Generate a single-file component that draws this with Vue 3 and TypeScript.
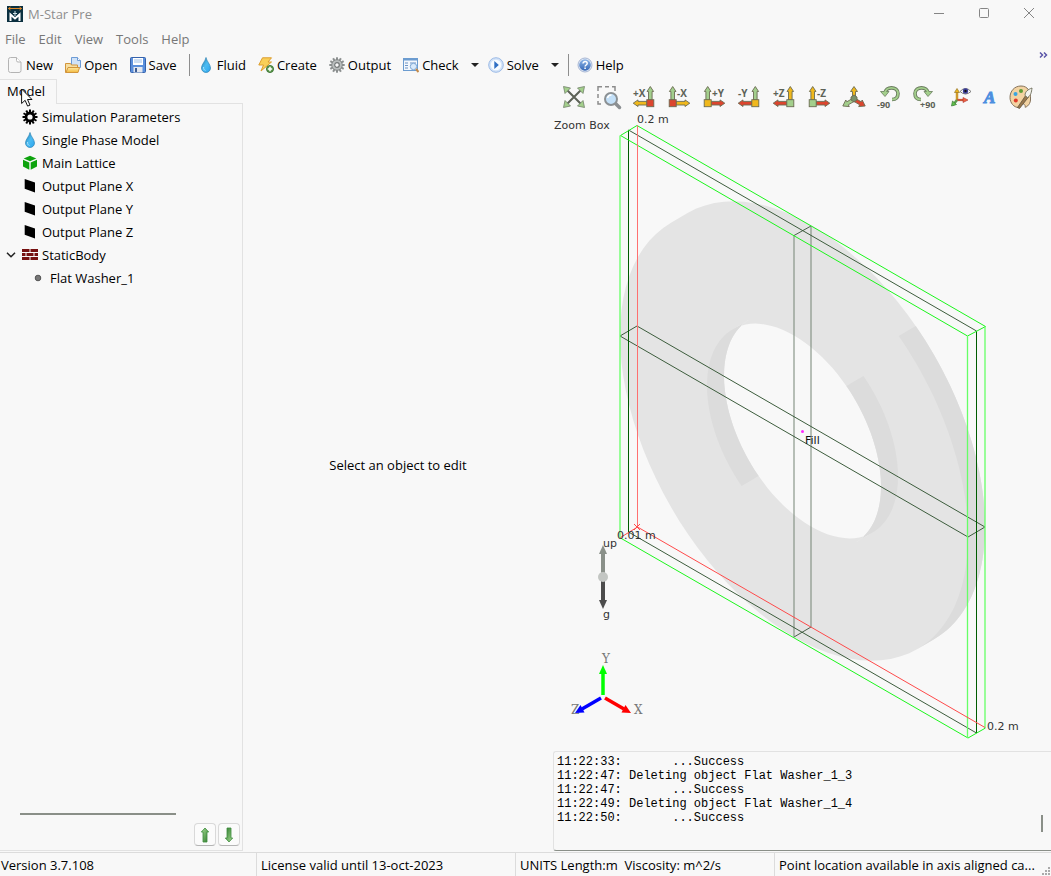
<script setup lang="ts">
import { ref } from 'vue'

interface Tool { label: string; icon: string; menu?: boolean; divider?: boolean }
interface View { sign: string; flip: boolean; up: string; side: string; hub: string }
interface Node { label: string; icon: string; open?: boolean; child?: boolean }

const menus = ['File', 'Edit', 'View', 'Tools', 'Help']

const tools: Tool[] = [
  { label: 'New', icon: 'new' },
  { label: 'Open', icon: 'open' },
  { label: 'Save', icon: 'save', divider: true },
  { label: 'Fluid', icon: 'drop' },
  { label: 'Create', icon: 'create' },
  { label: 'Output', icon: 'gear' },
  { label: 'Check', icon: 'check', menu: true },
  { label: 'Solve', icon: 'solve', menu: true, divider: true },
  { label: 'Help', icon: 'help' },
]

const green = '#a3cf8c'
const red = '#dc452e'
const gold = '#f0b81c'

const views: View[] = [
  { sign: '+X', flip: true, up: green, side: gold, hub: red },
  { sign: '-X', flip: false, up: green, side: gold, hub: red },
  { sign: '+Y', flip: false, up: green, side: red, hub: gold },
  { sign: '-Y', flip: true, up: green, side: red, hub: gold },
  { sign: '+Z', flip: true, up: gold, side: red, hub: green },
  { sign: '-Z', flip: false, up: gold, side: red, hub: green },
]

const nodes: Node[] = [
  { label: 'Simulation Parameters', icon: 'cog' },
  { label: 'Single Phase Model', icon: 'drop' },
  { label: 'Main Lattice', icon: 'cube' },
  { label: 'Output Plane X', icon: 'plane' },
  { label: 'Output Plane Y', icon: 'plane' },
  { label: 'Output Plane Z', icon: 'plane' },
  { label: 'StaticBody', icon: 'bricks', open: true },
  { label: 'Flat Washer_1', icon: 'dot', child: true },
]

const log = ref(
  [
    '11:22:33:       ...Success',
    '11:22:47: Deleting object Flat Washer_1_3',
    '11:22:47:       ...Success',
    '11:22:49: Deleting object Flat Washer_1_4',
    '11:22:50:       ...Success',
  ].join('\n'),
)

const status = [
  'Version 3.7.108',
  'License valid until 13-oct-2023',
  'UNITS Length:m  Viscosity: m^2/s',
  'Point location available in axis aligned ca...',
]

// Isometric projection of the washer: each face is a circle sheared into the X/Y plane.
type Face = 'front' | 'back'
const centre = { front: [794, 436], back: [811, 426] }

function arc(face: Face, radius: number, from: number, to: number): string[] {
  const [cx, cy] = centre[face]
  const steps = 48
  return Array.from({ length: steps + 1 }, (_, i) => {
    const t = ((from + ((to - from) * i) / steps) * Math.PI) / 180
    const x = cx + radius * 348 * Math.cos(t)
    const y = cy + radius * (201 * Math.cos(t) + 402 * Math.sin(t))
    return `${x.toFixed(1)},${y.toFixed(1)}`
  })
}
const path = (points: string[]) => `M${points.join('L')}Z`
const band = (radius: number, from: number, to: number) =>
  path([...arc('front', radius, from, to), ...arc('back', radius, to, from)])

const washer =
  path([...arc('back', 0.5, -135, 45), ...arc('front', 0.5, 45, 225)]) +
  path([...arc('front', 0.25, -135, 45), ...arc('back', 0.25, 45, 225)])
const walls = band(0.5, -53, 45) + band(0.25, -53, 45) + band(0.25, 127, 225)
const teeth = Array.from({ length: 12 }, (_, i) => i * 30)
</script>

<template>
  <div class="window">
    <svg class="defs" aria-hidden="true">
      <defs>
        <linearGradient id="g-drop" x1="0" y1="0" x2="1" y2="1">
          <stop offset="0" stop-color="#1d7fb0" /><stop offset=".5" stop-color="#4cbcf2" /><stop offset="1" stop-color="#2ba4ee" />
        </linearGradient>
        <linearGradient id="g-blue" x1="0" y1="0" x2="0" y2="1">
          <stop offset="0" stop-color="#8fb8ea" /><stop offset="1" stop-color="#3567b5" />
        </linearGradient>
        <linearGradient id="g-green" x1="0" y1="0" x2="1" y2="1">
          <stop offset="0" stop-color="#a8dc94" /><stop offset="1" stop-color="#2c7a2c" />
        </linearGradient>
        <linearGradient id="g-gold" x1="0" y1="0" x2="0" y2="1">
          <stop offset="0" stop-color="#fdeaa6" /><stop offset="1" stop-color="#f3b93c" />
        </linearGradient>
      </defs>
      <symbol id="i-new" viewBox="0 0 16 16">
        <path d="M3.500 .5h6l4.500 4.500v8.500a2 2 0 0 1-2 2h-8.500a2 2 0 0 1-2-2v-11a2 2 0 0 1 2-2z" fill="#f7f7f7" stroke="#b4b4b4" />
        <path d="M9.500 .5v3a1.500 1.500 0 0 0 1.500 1.500h3" fill="#fff" stroke="#b4b4b4" />
      </symbol>
      <symbol id="i-open" viewBox="0 0 16 16">
        <path d="M6.500 .5h6l3 3v7h-9z" fill="#cfe2f8" stroke="#6c9bd6" />
        <path d="M12.500 .5v3h3" fill="#fff" stroke="#6c9bd6" />
        <path d="M.5 15.500v-9h5l1 1.500h6v7.500z" fill="#f6dfa2" stroke="#d2953c" />
        <path d="M3 10.500h11.500l-1.500 5h-12z" fill="url(#g-gold)" stroke="#d2953c" />
      </symbol>
      <symbol id="i-save" viewBox="0 0 16 16">
        <rect x=".5" y=".5" width="15" height="15" rx="1" fill="#5a8fdc" stroke="#3562ac" />
        <rect x="3" y="1" width="10" height="7" fill="#fff" />
        <path d="M4 3h8M4 5h8" stroke="#9dbfe8" />
        <rect x="3.500" y="10" width="9" height="5.500" fill="#e3e7ee" />
        <rect x="5" y="11" width="2" height="4" fill="#3c5c94" />
      </symbol>
      <symbol id="i-drop" viewBox="0 0 16 16">
        <path d="M8 .5C7.500 4 3.500 7.500 3.500 11a4.500 4.500 0 0 0 9 0C12.500 7.500 8.500 4 8 .5z" fill="url(#g-drop)" stroke="#2c83b4" stroke-width=".7" />
        <path d="M5.500 10c0 2 .5 3 2 3.500" fill="none" stroke="#a8e0fb" />
      </symbol>
      <symbol id="i-create" viewBox="0 0 16 16">
        <path d="M4.500 .8h9L10 5h3.500L3 14l2.500-6H.8z" fill="#f9cf58" stroke="#dc9d2e" stroke-linejoin="round" />
        <circle cx="12" cy="12" r="3.500" fill="#5f9c4e" stroke="#3c7435" />
        <path d="M9.800 12h4.400M12 9.800v4.400" stroke="#fff" stroke-width="1.500" />
      </symbol>
      <symbol id="i-gear" viewBox="0 0 16 16">
        <rect v-for="a in teeth" :key="a" x="7" y=".3" width="2" height="3" fill="#8b8f8f" :transform="`rotate(${a} 8 8)`" />
        <circle cx="8" cy="8" r="5.300" fill="#b9bdbd" stroke="#858989" />
        <circle cx="8" cy="8" r="2.300" fill="#f8f8f8" stroke="#747878" stroke-width="1.200" />
      </symbol>
      <symbol id="i-check" viewBox="0 0 16 16">
        <rect x=".5" y="1.500" width="14" height="12" fill="#f4f8fd" stroke="#6c9cd0" />
        <path d="M0 2.500h15" stroke="#6c9cd0" stroke-width="2" />
        <path d="M2 6h3M2 8.500h3M2 11h3M7 6h6M7 8.500h2" stroke="#6d93c4" />
        <circle cx="10.500" cy="9.500" r="3.200" fill="#d9eafb" stroke="#7fa9d6" />
        <path d="M13 12l2.500 3" stroke="#c38a4b" stroke-width="2" />
      </symbol>
      <symbol id="i-solve" viewBox="0 0 16 16">
        <circle cx="8" cy="8" r="7.300" fill="#d3e3f8" stroke="#9dbbe6" />
        <circle cx="8" cy="8" r="5.300" fill="#f7fbff" />
        <path d="M6.300 4l4.500 4-4.500 4z" fill="#2f6fc4" />
      </symbol>
      <symbol id="i-help" viewBox="0 0 16 16">
        <circle cx="8" cy="8" r="7" fill="#e4eaf4" stroke="#a6b6d4" />
        <circle cx="8" cy="8" r="5.800" fill="url(#g-blue)" />
        <path d="M6 6.500c0-2.600 4.200-2.500 4.200 0 0 1.500-2.100 1.500-2.100 3M8.100 10.600v1.400" fill="none" stroke="#fff" stroke-width="1.500" />
      </symbol>
      <symbol id="i-cog" viewBox="0 0 16 16">
        <rect v-for="a in teeth" :key="a" x="7" y=".5" width="2" height="3.500" fill="#000" :transform="`rotate(${a} 8 8)`" />
        <circle cx="8" cy="8" r="4" fill="none" stroke="#000" stroke-width="2.800" />
      </symbol>
      <symbol id="i-cube" viewBox="0 0 16 16">
        <path d="M8 .8l6.300 2.700L8 6.300 1.700 3.500z" fill="#0ea30e" />
        <path d="M1 4.800l6.300 2.800v7.100L1 11.600zM15 4.800L8.700 7.600v7.100l6.300-3.100z" fill="#0ea30e" />
      </symbol>
      <symbol id="i-plane" viewBox="0 0 16 16"><path d="M2.700 1L13 4.500V14.500L2.700 10.800z" fill="#000" /></symbol>
      <symbol id="i-bricks" viewBox="0 0 16 16">
        <path d="M0 3.500h7.500M8.500 3.500H16M0 7.500h3.500M4.500 7.500h7M12.500 7.500H16M0 11.500h7.500M8.500 11.500H16" stroke="#761010" stroke-width="3" />
      </symbol>
      <symbol id="i-dot" viewBox="0 0 16 16">
        <circle cx="8" cy="8" r="2.800" fill="#777" stroke="#555" />
      </symbol>
      <symbol id="i-arrow" viewBox="0 0 16 16">
        <path d="M8 1l3.700 4H10v10H6V5H4.300z" fill="url(#g-green)" stroke="#3c8c3c" stroke-width=".8" />
      </symbol>
    </svg>

    <header class="titlebar">
      <svg class="logo" viewBox="0 0 16 16" aria-hidden="true">
        <rect width="16" height="16" fill="#0b3040" />
        <path d="M1.500 2.500h13M3.500 1L1.500 2.500l2 1.500M12.500 1l2 1.500-2 1.500" fill="none" stroke="#e08a2a" />
        <path d="M3.500 15V8.500L8 12.500l4.500-4V15" fill="none" stroke="#fff" stroke-width="2" />
        <path d="M8 5v5M6 7.500h4" stroke="#cfe0e6" />
      </svg>
      <span class="title">M-Star Pre</span>
      <div class="controls">
        <button type="button" aria-label="Minimize"><svg viewBox="0 0 12 12"><path d="M1 6.500h10" /></svg></button>
        <button type="button" aria-label="Maximize"><svg viewBox="0 0 12 12"><rect x="1.500" y="1.500" width="9" height="9" rx="1" /></svg></button>
        <button type="button" aria-label="Close"><svg viewBox="0 0 12 12"><path d="M1 1l10 10M11 1L1 11" /></svg></button>
      </div>
    </header>

    <nav class="menubar">
      <button v-for="m in menus" :key="m" type="button">{{ m }}</button>
    </nav>

    <div class="toolbar">
      <template v-for="t in tools" :key="t.label">
        <button type="button" class="tool"><svg class="ico" aria-hidden="true"><use :href="`#i-${t.icon}`" /></svg>{{ t.label }}</button>
        <button v-if="t.menu" type="button" class="caret" :aria-label="`${t.label} options`">
          <svg viewBox="0 0 8 4"><path d="M0 0h8L4 4z" /></svg>
        </button>
        <span v-if="t.divider" class="divider"></span>
      </template>
      <button type="button" class="more" aria-label="More tools">
        <svg viewBox="0 0 9 6"><path d="M1 .5L3.500 3 1 5.500M5 .5L7.500 3 5 5.500" /></svg>
      </button>
    </div>

    <main class="workspace">
      <section class="model">
        <div class="tabs" role="tablist">
          <button type="button" role="tab" aria-selected="true">Model</button>
          <svg class="pointer" viewBox="0 0 12 19" aria-hidden="true"><path d="M.6 1v14.500l3.500-3.200 2.500 5.800 2.400-1-2.500-5.600h4.500z" /></svg>
        </div>
        <div class="panel">
          <ul class="tree" role="tree">
            <li v-for="n in nodes" :key="n.label" role="treeitem" :class="{ child: n.child }">
              <span class="twisty"><svg v-if="n.open" viewBox="0 0 10 6"><path d="M1 .8l4 4 4-4" /></svg></span>
              <svg class="ico" aria-hidden="true"><use :href="`#i-${n.icon}`" /></svg>
              <span>{{ n.label }}</span>
            </li>
          </ul>
          <div class="scroll-x"></div>
          <div class="order">
            <button type="button" aria-label="Move up"><svg class="ico"><use href="#i-arrow" /></svg></button>
            <button type="button" aria-label="Move down"><svg class="ico down"><use href="#i-arrow" /></svg></button>
          </div>
        </div>
      </section>

      <section class="editor"><p>Select an object to edit</p></section>

      <section class="display">
        <div class="viewbar">
          <button type="button" aria-label="Fit view">
            <svg viewBox="0 0 24 24">
              <path d="M5 5l14 14M19 5L5 19" stroke="#5d6257" stroke-width="2" />
              <path d="M1.500 1.500l7 1.500L3 8.500zM22.500 1.500l-7 1.500L21 8.500zM1.500 22.500l7-1.500L3 15.500zM22.500 22.500l-7-1.500 5.500-5.500z" fill="#a3cf8c" stroke="#71826a" stroke-width=".8" />
            </svg>
          </button>
          <button type="button" aria-label="Zoom box">
            <svg viewBox="0 0 24 24">
              <path d="M1 6V1.800h4M8 1.800h4M15 1.800h3V6M1 9v4M1 16v3h3" fill="none" stroke="#8c8c8c" stroke-width="1.500" />
              <path d="M17.500 17.500l5 5" stroke="#8b8f92" stroke-width="3.500" stroke-linecap="round" />
              <circle cx="14" cy="14" r="6" fill="#c3e0f8" stroke="#8b9093" stroke-width="2" />
              <path d="M10.500 13a4 4 0 0 1 4-3" fill="none" stroke="#fff" stroke-width="1.500" />
            </svg>
          </button>
          <button v-for="v in views" :key="v.sign" type="button">
            <svg viewBox="0 0 24 24">
              <g :transform="v.flip ? 'translate(24 0) scale(-1 1)' : ''" stroke="#6b6b52" stroke-width=".9">
                <path d="M5.700 1.500l3.300 5H7.500V15H3.900V6.500H2.400z" :fill="v.up" />
                <path d="M22.800 18.200l-4.800 3.300v-1.500H9v-3.600h9v-1.500z" :fill="v.side" />
                <rect x="2.200" y="14.700" width="7" height="7" :fill="v.hub" />
              </g>
              <text :x="v.flip ? 1 : 10" y="12">{{ v.sign }}</text>
            </svg>
          </button>
          <button type="button" aria-label="Isometric view">
            <svg viewBox="0 0 24 24" stroke="#6b6b52" stroke-width=".9">
              <path d="M12 1.500l3.500 5h-2V14h-3V6.500h-2z" fill="#f0b81c" />
              <path d="M.8 21l3-6 1 1.800 6-3.500 1.500 3-6 3.500 1 1.800z" fill="#a3cf8c" />
              <path d="M23.200 21l-3-6-1 1.800-6-3.500-1.500 3 6 3.500-1 1.800z" fill="#dc452e" />
              <path d="M12 10l3 2v3l-3 2-3-2v-3z" fill="#78906a" />
            </svg>
          </button>
          <button type="button">
            <svg viewBox="0 0 24 24">
              <path d="M8 8.500C8 1 21 1 21 8.500c0 4-2.500 6-6 6" fill="none" stroke="#6a7d5e" stroke-width="3.600" />
              <path d="M3.500 6.500h8.500l-4 5z" fill="#a3cf8c" stroke="#6a7d5e" stroke-width=".8" />
              <path d="M8 8.500C8 1 21 1 21 8.500c0 4-2.500 6-6 6" fill="none" stroke="#a3cf8c" stroke-width="1.800" />
              <text x="0" y="23" class="small">-90</text>
            </svg>
          </button>
          <button type="button">
            <svg viewBox="0 0 24 24">
              <path d="M16 8.500C16 1 3 1 3 8.500c0 4 2.500 6 6 6" fill="none" stroke="#6a7d5e" stroke-width="3.600" />
              <path d="M20.500 6.500H12l4 5z" fill="#a3cf8c" stroke="#6a7d5e" stroke-width=".8" />
              <path d="M16 8.500C16 1 3 1 3 8.500c0 4 2.500 6 6 6" fill="none" stroke="#a3cf8c" stroke-width="1.800" />
              <text x="8" y="23" class="small">+90</text>
            </svg>
          </button>
          <div class="extras">
            <button type="button" aria-label="Axes visibility">
              <svg viewBox="0 0 24 24">
                <path d="M8 16V7" stroke="#cf9a2c" stroke-width="2.500" />
                <path d="M8 3.500l2.500 4h-5z" fill="#f0b81c" stroke="#94742a" stroke-width=".7" />
                <path d="M8 15h7" stroke="#c9573b" stroke-width="2.200" /><path d="M19 15l-5-2.500v5z" fill="#f0623f" stroke="#a33" stroke-width=".6" />
                <path d="M8 15l-4 5" stroke="#5f9c4e" stroke-width="2.500" /><path d="M2.500 21l1-5 4 3.500z" fill="#5fc64b" stroke="#3c7435" stroke-width=".7" />
                <path d="M11 6.500q5.500-6 11 0q-5.500 5-11 0z" fill="#fff" stroke="#777" />
                <circle cx="16.500" cy="6" r="2.700" fill="#3d3f9c" /><circle cx="16.500" cy="6" r="1.200" fill="#111" />
              </svg>
            </button>
            <button type="button" aria-label="Text">
              <svg viewBox="0 0 24 24"><text x="5" y="18" class="letter">A</text></svg>
            </button>
            <button type="button" aria-label="Colours">
              <svg viewBox="0 0 24 24">
                <path d="M12 1C5.500 1 1 6 1 12.500 1 18 5 22.500 9.500 22.500c2 0 2-2.500 3.500-3.500s4 1.500 3 3c-.5 1 5-1 5.500-7C22 6 18.500 1 12 1z" fill="#f3d3a2" stroke="#85725b" />
                <circle cx="6.500" cy="9" r="2" fill="#3aa5df" /><circle cx="12" cy="6" r="2" fill="#5f9c36" /><circle cx="6.800" cy="15.500" r="2" fill="#e03a28" />
                <path d="M8.500 22.500L17 10l2.500 2-9 11.500z" fill="#99784d" stroke="#5f533c" stroke-width=".8" />
                <path d="M16 10.500c0-4 3-6 7-7.500-.5 4-1 7.500-4.500 9.500z" fill="#f3f3ee" stroke="#777764" />
              </svg>
            </button>
          </div>
        </div>

        <svg class="scene" viewBox="553 116 498 635" role="img" aria-label="Flat washer model">
          <path :d="washer" fill="#e4e4e4" fill-rule="evenodd" />
          <path :d="walls" fill="#dcdcdc" />
          <g fill="none">
            <path d="M794 235.500L811 226M811 627l-17 10" stroke="#4a5f4a" />
            <path d="M794 235.500V637M811 226V627" stroke="#748474" />
            <path d="M620 336l17-10 348 201-17 10z" stroke="#3c5c3c" />
            <path d="M628.500 130L976.500 331M628.500 532L976.500 733" stroke="#3c5c3c" />
            <path d="M628.500 130v402M976.500 331v402" stroke="#005c00" />
            <path d="M620.500 135.500L637 125.500 985.500 326.500 967.500 336 620.500 135.500M620.500 538L968 738l17.500-10" stroke="#1cf51c" />
            <path d="M620 135.500V538M985 326.500V728M967.500 336V738" stroke="#66ff66" stroke-width="1.300" />
            <path d="M637.500 125.500V527" stroke="#ff7070" />
            <path d="M620.500 537.500L637.500 527 985 727.500M634 524l6 6M640 524l-6 6" stroke="#ff4a4a" />
          </g>
          <circle cx="802.500" cy="431.500" r="1.500" fill="#ff2cff" />
          <g class="marks">
            <text x="554" y="129">Zoom Box</text>
            <text x="637" y="123">0.2 m</text>
            <text x="617" y="539">0.01 m</text>
            <text x="987" y="730">0.2 m</text>
            <text x="603" y="547">up</text>
            <text x="603" y="618">g</text>
            <text x="805" y="444" fill="#111">Fill</text>
          </g>
          <path d="M603 576v-23" stroke="#8a9089" stroke-width="4" /><path d="M603 545l4 9h-8z" fill="#8a9089" />
          <path d="M603 578v23" stroke="#4c4c4c" stroke-width="4" /><path d="M603 609l4-9h-8z" fill="#4c4c4c" />
          <circle cx="603" cy="577" r="5" fill="#c3c6c3" />
          <g class="axes">
            <text x="602" y="663">Y</text><text x="634" y="714">X</text><text x="571" y="714">Z</text>
          </g>
          <path d="M603 695v-23" stroke="#0f0" stroke-width="3.500" /><path d="M603 665l4 9h-8z" fill="#0f0" />
          <path d="M605 698l19 11" stroke="#f00" stroke-width="3.500" /><path d="M631 713l-9.500-.5 4-7.500z" fill="#f00" />
          <path d="M601 698l-19 11" stroke="#00f" stroke-width="3.500" /><path d="M575 713l9.500-.5-4-7.500z" fill="#00f" />
        </svg>

        <div class="log">
          <textarea v-model="log" readonly aria-label="Message log"></textarea>
          <span class="thumb"></span>
        </div>
      </section>
    </main>

    <footer class="status">
      <span v-for="s in status" :key="s">{{ s }}</span>
      <svg class="grip" viewBox="0 0 9 10" aria-hidden="true"><path d="M6 1h2M3 4h2M6 4h2M0 7h2M3 7h2M6 7h2" /></svg>
    </footer>
  </div>
</template>

<style>
body { background: #f8f8f8; }
</style>

<style scoped>
.window {
  display: flex;
  flex-direction: column;
  min-height: 100vh;
  background: #f8f8f8;
  color: #000;
  font: 13px/18px "Open Sans", "Noto Sans", sans-serif;
}
.defs { position: absolute; width: 0; height: 0; }
button {
  padding: 0;
  border: 0;
  background: none;
  color: inherit;
  font: inherit;
}
.ico { width: 16px; height: 16px; flex: none; }

.titlebar { display: flex; align-items: center; height: 28px; padding-left: 7px; color: #8e8e8e; }
.logo { width: 16px; height: 16px; margin-right: 5px; }
.controls { display: flex; margin-left: auto; }
.controls button { width: 45px; height: 26px; }
.controls svg { width: 12px; height: 12px; fill: none; stroke: #858585; }

.menubar { display: flex; align-items: center; gap: 13px; height: 22px; padding-left: 5px; color: #777; }

.toolbar { display: flex; align-items: center; height: 29px; padding-left: 7px; }
.tool { display: flex; align-items: center; gap: 3px; margin-right: 12px; }
.caret { display: flex; width: 8px; margin-right: 9px; }
.caret svg { width: 8px; height: 4px; fill: #222; }
.divider { width: 1px; height: 22px; margin-right: 8px; background: #8e8e8e; }
.more { display: flex; align-self: flex-start; margin: 2px 3px 0 auto; }
.more svg { width: 9px; height: 6px; fill: none; stroke: #5a55a8; stroke-width: 1.5; }

.workspace { display: grid; flex: 1; grid-template-columns: 243px 310px minmax(0, 1fr); }
.model { display: flex; flex-direction: column; }
.tabs { position: relative; height: 24px; }
.tabs button {
  position: relative;
  width: 57px;
  height: 25px;
  padding: 0 4px 2px 0;
  border: 1px solid #e2e2e2;
  border-width: 1px 1px 0 0;
  background: #f8f8f8;
}
.pointer { position: absolute; z-index: 2; top: 9px; left: 21px; width: 12px; height: 19px; fill: #fff; stroke: #111; }
.panel {
  display: flex;
  flex: 1;
  flex-direction: column;
  margin-bottom: 1px;
  border: 1px solid #e2e2e2;
  border-left: 0;
}
.tree { flex: 1; margin: 0; padding: 1px 0 0; list-style: none; }
.tree li { display: flex; align-items: center; height: 23px; padding-left: 6px; gap: 4px; }
.tree .child { padding-left: 14px; }
.twisty { display: flex; width: 12px; }
.twisty svg { width: 10px; height: 6px; fill: none; stroke: #222; stroke-width: 1.5; }
.scroll-x { width: 156px; height: 2px; margin-left: 20px; background: #8a8f88; }
.order { display: flex; justify-content: flex-end; gap: 2px; padding: 8px 2px 4px; }
.order button {
  display: grid;
  width: 22px;
  height: 23px;
  place-items: center;
  border: 1px solid #d9d9d9;
  border-bottom-color: #b4b4b4;
  border-radius: 4px;
  background: #fbfbfb;
}
.down { transform: rotate(180deg); }

.editor { display: grid; padding-bottom: 2px; place-items: center; }
.editor p { margin: 0; }

.display { display: flex; flex-direction: column; min-width: 0; }
.viewbar { display: flex; height: 37px; padding-left: 3px; }
.viewbar button { display: grid; width: 35px; height: 36px; place-items: center; }
.viewbar svg { width: 24px; height: 24px; overflow: visible; }
.viewbar text { fill: #5d6257; stroke: none; font: bold 10px "Open Sans", sans-serif; }
.viewbar .small { font-size: 9px; }
.viewbar .letter { fill: #4d8fe0; font: italic bold 17px "Liberation Serif", serif; stroke: #4d8fe0; }
.extras { display: flex; margin-left: 5px; }
.extras button { width: 30px; }
.scene { display: block; flex: 1; width: 100%; min-height: 0; overflow: visible; }
.marks { fill: #333; font: 11px "DejaVu Sans", sans-serif; }
.axes { fill: #777; font: 12px "DejaVu Serif", serif; }

.log {
  position: relative;
  display: flex;
  height: 98px;
  margin-bottom: 1px;
  border: 1px solid #e2e2e2;
  border-width: 1px 0 1px 1px;
  border-bottom-color: #8a8f88;
  border-radius: 3px 0 0 3px;
}
.log textarea {
  flex: 1;
  padding: 3px;
  border: 0;
  outline: 0;
  background: none;
  color: #000;
  font: 12px/14px "Liberation Mono", monospace;
  overflow: hidden;
  resize: none;
}
.thumb { position: absolute; right: 8px; bottom: 18px; width: 2px; height: 17px; background: #8a8f88; }

.status {
  position: relative;
  display: grid;
  grid-template-columns: 256px 259px 259px minmax(0, 1fr);
  height: 24px;
  border-top: 1px solid #dcdcdc;
  line-height: 24px;
  white-space: pre;
}
.status span { padding-left: 4px; border-left: 1px solid #dcdcdc; overflow: hidden; }
.status span:first-child { padding-left: 1px; border: 0; }
.grip { position: absolute; right: 0; bottom: 0; width: 9px; height: 10px; stroke: #aaa; stroke-width: 2; }
</style>
